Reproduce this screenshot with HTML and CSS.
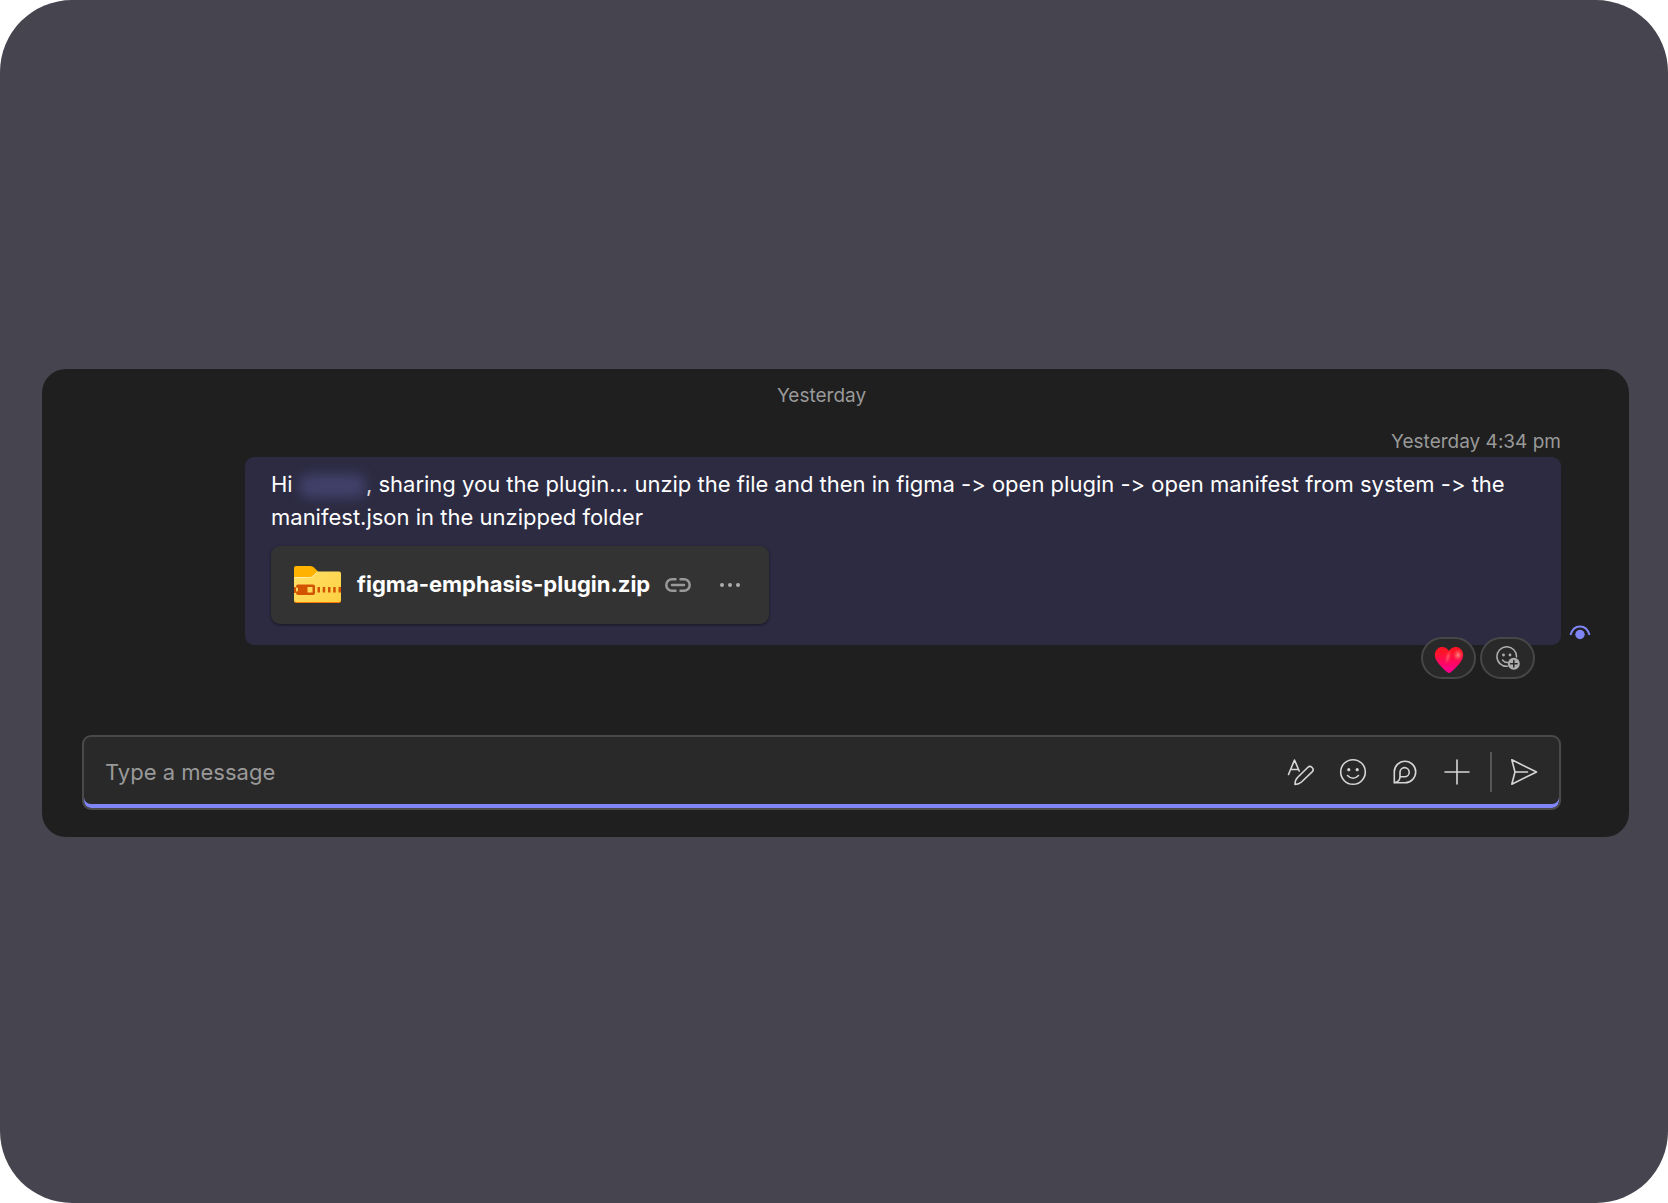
FILE: index.html
```html
<!DOCTYPE html>
<html lang="en">

<head>
    <meta charset="UTF-8">
    <meta name="viewport" content="width=device-width, initial-scale=1.0">
    <title>Chat</title>
    <link rel="stylesheet" href="styles.css">
</head>

<body>
    <main class="page">
        <section class="chat">
            <p class="day">Yesterday</p>

            <!-- Message -->
            <div class="message-row">
                <article class="message">
                    <time class="time">Yesterday 4:34 pm</time>
                    <div class="bubble">
                        <p>Hi <span class="hidden-name"></span>, sharing you the plugin... unzip the file and then in figma -&gt; open plugin -&gt; open manifest from system -&gt; the manifest.json in the unzipped folder</p>
                        <div class="attachment">
                            <svg class="folder" viewBox="0 0 47 37" aria-hidden="true">
                                <defs>
                                    <linearGradient id="folderFill" x1="0" y1="0" x2="1" y2="1">
                                        <stop offset="0" stop-color="#ffe06a" />
                                        <stop offset="1" stop-color="#ffd040" />
                                    </linearGradient>
                                </defs>
                                <path fill="#ffb300" d="M0 2Q0 0 2 0h14.500q2 0 3.500 1.500L24 5.500V14H0z" />
                                <path fill="#f57c00" d="M0 30h47v5q0 2-2 2H2q-2 0-2-2z" />
                                <path fill="url(#folderFill)" d="M0 11.500h15.500q2.200 0 3.700-1.600L24 5.500h21q2 0 2 2v26.500q0 2-2 2H2q-2 0-2-2z" />
                                <path fill="none" stroke="#ffeba0" d="M0 11.500h15.500q2.200 0 3.700-1.600L24 5.500" />
                                <path fill="#d35400" fill-rule="evenodd" d="M4 18.500h15q2 0 2 2v6.500q0 2-2 2H4q-2 0-2-2v-1.500h1q1 0 1-1v-2q0-1-1-1H2v-1q0-2 2-2zM13.500 21v5.500h5V21z" />
                                <path fill="#d35400" d="M0 21h1q1 0 1 1v4q0 1-1 1H0zM23.500 21H26v5.500h-2.500zM28.700 21h2.500v5.500h-2.500zM34 21h2.500v5.500H34zM39.200 21h2.500v5.500h-2.500zM44.500 21H47v5.500h-2.500z" />
                            </svg>
                            <a class="file-name" href="#">figma-emphasis-plugin.zip</a>
                            <button class="icon-button" type="button" aria-label="Copy link">
                                <svg width="26" height="26" viewBox="0 0 26 26">
                                    <path d="M10.500 7.300H7a5.700 5.700 0 0 0 0 11.400h3.500M15.500 7.300H19a5.700 5.700 0 0 1 0 11.400h-3.500M7 13h12" />
                                </svg>
                            </button>
                            <button class="icon-button more" type="button" aria-label="More options">
                                <svg width="20" height="20" viewBox="0 0 20 20">
                                    <circle cx="2" cy="10" r="2" />
                                    <circle cx="10" cy="10" r="2" />
                                    <circle cx="18" cy="10" r="2" />
                                </svg>
                            </button>
                        </div>
                    </div>
                    <div class="reactions">
                        <button type="button" aria-label="Heart">
                            <svg class="heart" width="30" height="26" viewBox="0 0 30 26">
                                <defs>
                                    <linearGradient id="heartFill" x1="0" y1="0" x2="0" y2="1">
                                        <stop offset="0.2" stop-color="#ff1426" />
                                        <stop offset="0.9" stop-color="#ff008c" />
                                    </linearGradient>
                                    <radialGradient id="heartGlow">
                                        <stop offset="0" stop-color="#ff8a80" />
                                        <stop offset="1" stop-color="#ff5060" stop-opacity="0" />
                                    </radialGradient>
                                </defs>
                                <path fill="url(#heartFill)" d="M15 4C12.500-.500 7-.800 4 1.500.500 4.200-.200 9 2.500 13.500 5 18 9.500 22 13.300 25.300q1.700 1.400 3.400 0C20.500 22 25 18 27.500 13.500 30.200 9 29.500 4.200 26 1.500 23-.800 17.500-.500 15 4z" />
                                <ellipse fill="url(#heartGlow)" cx="24" cy="8" rx="5" ry="6" />
                                <ellipse fill="url(#heartGlow)" cx="14" cy="10" rx="3" ry="8" transform="rotate(15 14 10)" opacity="0.6" />
                            </svg>
                        </button>
                        <button type="button" aria-label="Add reaction">
                            <svg class="add-reaction" width="24" height="24" viewBox="0 0 24 24">
                                <path d="M11.500 20.300A9.800 9.800 0 1 1 20.500 11M6.500 14q1.800 2.500 5 2.500" />
                                <circle class="dot" cx="7.500" cy="9" r="1.400" />
                                <circle class="dot" cx="14" cy="9" r="1.400" />
                                <circle class="dot" cx="17.800" cy="17.800" r="6" />
                                <path class="cross" d="M17.800 14.500v6.600M14.500 17.800h6.600" />
                            </svg>
                        </button>
                    </div>
                </article>
                <svg class="seen" width="22" height="16" viewBox="0 0 22 16" role="img" aria-label="Seen">
                    <path d="M1.500 10C4.500-1.500 17.500-1.500 20.500 10" />
                    <circle cx="11" cy="9.500" r="4.700" />
                </svg>
            </div>

            <!-- Composer -->
            <form class="composer">
                <input type="text" placeholder="Type a message" aria-label="Type a message">
                <button type="button" aria-label="Format">
                    <svg width="28" height="28" viewBox="0 0 28 28">
                        <path d="M1.500 16.500L7.500 2l4.700 11M3.500 11.500h8" />
                        <path d="M20.700 9.500a3.100 3.100 0 0 1 4.400 4.400L14.500 24q-2.500 2.300-6.500 2.500Q8 22 10.500 19.500z" />
                    </svg>
                </button>
                <button type="button" aria-label="Emoji">
                    <svg width="28" height="28" viewBox="0 0 28 28">
                        <circle cx="14" cy="14" r="12.300" />
                        <path d="M8.500 17.500q5.500 5.600 11 0" />
                        <circle class="dot" cx="9.800" cy="11.700" r="1.600" />
                        <circle class="dot" cx="18.200" cy="11.700" r="1.600" />
                    </svg>
                </button>
                <button type="button" aria-label="Loop components">
                    <svg width="28" height="28" viewBox="0 0 28 28">
                        <path d="M3.300 25V14A10.700 10.700 0 1 1 14 24.700H3.300q5.700-.700 5.700-6.200v-4.300a4.600 4.600 0 1 1 4.600 4.600H9.200" />
                    </svg>
                </button>
                <button type="button" aria-label="Add">
                    <svg width="28" height="28" viewBox="0 0 28 28">
                        <path d="M14 2v24M2 14h24" />
                    </svg>
                </button>
                <span class="divider"></span>
                <button type="submit" aria-label="Send">
                    <svg width="28" height="28" viewBox="0 0 28 28">
                        <path d="M1.800 1.800L26.500 14 1.800 26.200 5 14zM5 14h12.500" />
                    </svg>
                </button>
            </form>
        </section>
    </main>
</body>

</html>
```
FILE: styles.css
```css
/* Reset CSS */
* {
    box-sizing: border-box;
    margin: 0;
    padding: 0;
}

/* Global Styles */
body {
    font-family: Inter, "Liberation Sans", sans-serif;
    font-size: 22px;
    font-variant-ligatures: no-contextual;
    line-height: 33px;
    color: #fff;
    background-color: #fff;
}

button {
    display: flex;
    align-items: center;
    justify-content: center;
    background: none;
    border: none;
    cursor: pointer;
}

svg {
    flex: none;
}

.page {
    display: flex;
    align-items: center;
    min-height: 100vh;
    padding: 2px 39px 0 42px;
    background-color: #45444f;
    border-radius: 72px;
}

.chat {
    flex: 1;
    min-width: 0;
    padding: 13px 38px 27px 40px;
    background-color: #1f1f1f;
    border-radius: 24px;
}

.day,
.time {
    font-size: 19px;
    line-height: 28px;
    color: #999;
}

.day {
    margin: 0 30px 18px 0;
    text-align: center;
}

/* Message */
.message-row {
    display: flex;
    margin-left: 163px;
}

.message {
    flex: 1;
    min-width: 0;
}

.time {
    display: block;
    margin-bottom: 1px;
    text-align: right;
}

.bubble {
    padding: 11px 26px 21px;
    background-color: #2c2b42;
    border-radius: 9px;
}

.hidden-name {
    display: inline-block;
    width: 67px;
    height: 24px;
    vertical-align: middle;
    background-color: #414069;
    border-radius: 10px;
    filter: blur(6px);
}

.attachment {
    display: inline-flex;
    align-items: center;
    height: 78px;
    margin-top: 12px;
    padding: 0 29px 0 23px;
    background-color: #333;
    border-radius: 9px;
    box-shadow: 0 1px 3px rgba(0, 0, 0, 0.5);
    vertical-align: top;
}

.folder {
    width: 47px;
    height: 37px;
}

.file-name {
    margin: 0 15px 0 16px;
    font-weight: 700;
    color: #fff;
    text-decoration: none;
}

.icon-button path {
    fill: none;
    stroke: #999;
    stroke-width: 2.5;
    stroke-linecap: round;
}

.icon-button circle {
    fill: #adadad;
}

.more {
    margin-left: 29px;
}

/* Reactions */
.reactions {
    display: flex;
    justify-content: flex-end;
    gap: 4px;
    margin: -8px 26px 0 0;
}

.reactions button {
    width: 55px;
    height: 42px;
    background-color: #292929;
    border: 2px solid #474747;
    border-radius: 21px;
}

.heart {
    margin-top: 4px;
}

.add-reaction path {
    fill: none;
    stroke: #adadad;
    stroke-width: 1.5;
    stroke-linecap: round;
}

.add-reaction .dot {
    fill: #adadad;
}

.add-reaction .cross {
    stroke: #292929;
}

.seen {
    align-self: flex-end;
    margin: 0 0 38px 8px;
}

.seen path {
    fill: none;
    stroke: #7f85f5;
    stroke-width: 2;
}

.seen circle {
    fill: #7f85f5;
}

/* Composer */
.composer {
    display: flex;
    align-items: center;
    height: 75px;
    margin: 56px 30px 0 0;
    padding: 0 9px 0 21px;
    background-color: #292929;
    border: 2px solid #4a4a4a;
    border-radius: 9px;
    box-shadow: inset 0 -4px #7f85f5;
}

.composer input {
    flex: 1;
    min-width: 0;
    font: inherit;
    color: #fff;
    background: none;
    border: none;
    outline: none;
}

.composer input::placeholder {
    color: #999;
    opacity: 1;
}

.composer button {
    width: 52px;
    height: 52px;
}

.composer path,
.composer circle {
    fill: none;
    stroke: #d6d6d6;
    stroke-width: 1.6;
    stroke-linecap: round;
    stroke-linejoin: round;
}

.composer .dot {
    fill: #d6d6d6;
    stroke: none;
}

.divider {
    width: 2px;
    height: 40px;
    margin: 0 6px 0 7px;
    background-color: #575757;
}

/* Adjustments for small screens */
@media only screen and (max-width: 768px) {
    .page {
        padding: 0 12px;
        border-radius: 24px;
    }

    .chat {
        padding: 12px;
    }

    .message-row {
        margin-left: 0;
    }

    .composer button {
        width: 36px;
    }
}
```
